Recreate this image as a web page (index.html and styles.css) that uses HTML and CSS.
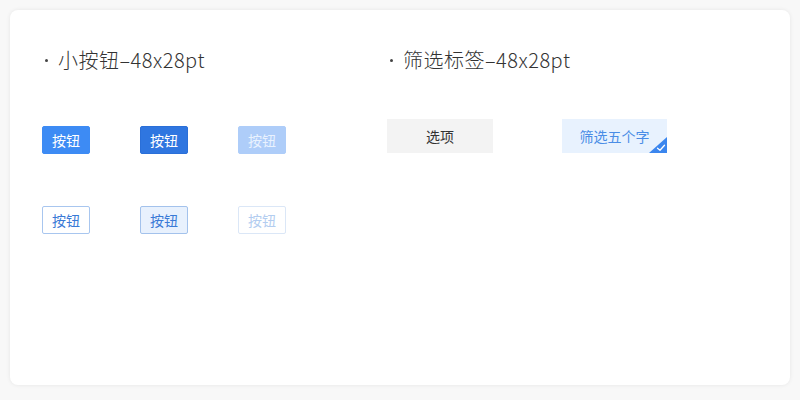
FILE: index.html
```html
<!DOCTYPE html>
<html lang="zh">
<head>
<meta charset="utf-8">
<link rel="stylesheet" href="styles.css">
</head>
<body>
<div class="card">
  <section class="group group-buttons">
    <h2 class="title"><span class="dot"></span>小按钮–48x28pt</h2>
    <div class="btn-grid">
      <button class="btn primary">按钮</button>
      <button class="btn primary pressed">按钮</button>
      <button class="btn primary disabled">按钮</button>
      <button class="btn outline">按钮</button>
      <button class="btn outline pressed">按钮</button>
      <button class="btn outline disabled">按钮</button>
    </div>
  </section>
  <section class="group group-tags">
    <h2 class="title"><span class="dot"></span>筛选标签–48x28pt</h2>
    <div class="tag-row">
      <div class="tag">选项</div>
      <div class="tag selected">筛选五个字
        <svg class="corner" width="18" height="16" viewBox="0 0 18 16">
          <polygon points="18,0 18,16 0,16" fill="#3b86ee"/>
          <path d="M8.5 11.2 L11 13.2 L15.5 8.2" fill="none" stroke="#fff" stroke-width="1.3" stroke-linecap="round" stroke-linejoin="round"/>
        </svg>
      </div>
    </div>
  </section>
</div>
</body>
</html>
```
FILE: styles.css
```css
* { box-sizing: border-box; }
html, body { margin: 0; padding: 0; }
body {
  background: #f8f8f8;
  padding: 10px;
  font-family: "Noto Sans CJK SC", "Liberation Sans", sans-serif;
  color: #333;
}
.card {
  width: 780px;
  height: 375px;
  background: #fff;
  border-radius: 8px;
  box-shadow: 0 0 4px rgba(0,0,0,0.08);
  padding: 38px 0 0 32px;
  display: flex;
}
.group-buttons { width: 345px; }
.title {
  margin: 0;
  font-size: 20px;
  line-height: 24px;
  font-weight: 300;
  color: #333;
  display: flex;
  align-items: center;
  letter-spacing: 0.5px;
}
.dot {
  width: 3px;
  height: 3px;
  border-radius: 50%;
  background: #444;
  margin: 1px 10px 0 3px;
}
.btn-grid {
  margin-top: 54px;
  display: grid;
  grid-template-columns: repeat(3, 48px);
  column-gap: 50px;
  row-gap: 52px;
}
.btn {
  width: 48px;
  height: 28px;
  padding: 0;
  border-radius: 2px;
  font-family: inherit;
  font-size: 14px;
  line-height: 26px;
  border: 1px solid transparent;
}
.primary { background: #3d8bf4; border-color: #3d8bf4; color: #fff; }
.primary.pressed { background: #2f76e0; border-color: #2a6fd8; }
.primary.disabled { background: #aecdf9; border-color: #aecdf9; color: #e9f2fe; }
.outline { background: #fff; border-color: #a8c6ef; color: #3a7ad6; }
.outline.pressed { background: #e8f1fd; border-color: #a3c2ec; }
.outline.disabled { border-color: #dbe7f7; color: #b3cdf0; }
.tag-row {
  margin-top: 47px;
  display: flex;
  gap: 69px;
}
.tag {
  position: relative;
  width: 106px;
  height: 34px;
  background: #f3f3f3;
  font-size: 14px;
  line-height: 34px;
  text-align: center;
  color: #333;
}
.tag.selected { width: 105px; background: #e8f2fe; color: #4a8de6; }
.corner { position: absolute; right: 0; bottom: 0; }
```
